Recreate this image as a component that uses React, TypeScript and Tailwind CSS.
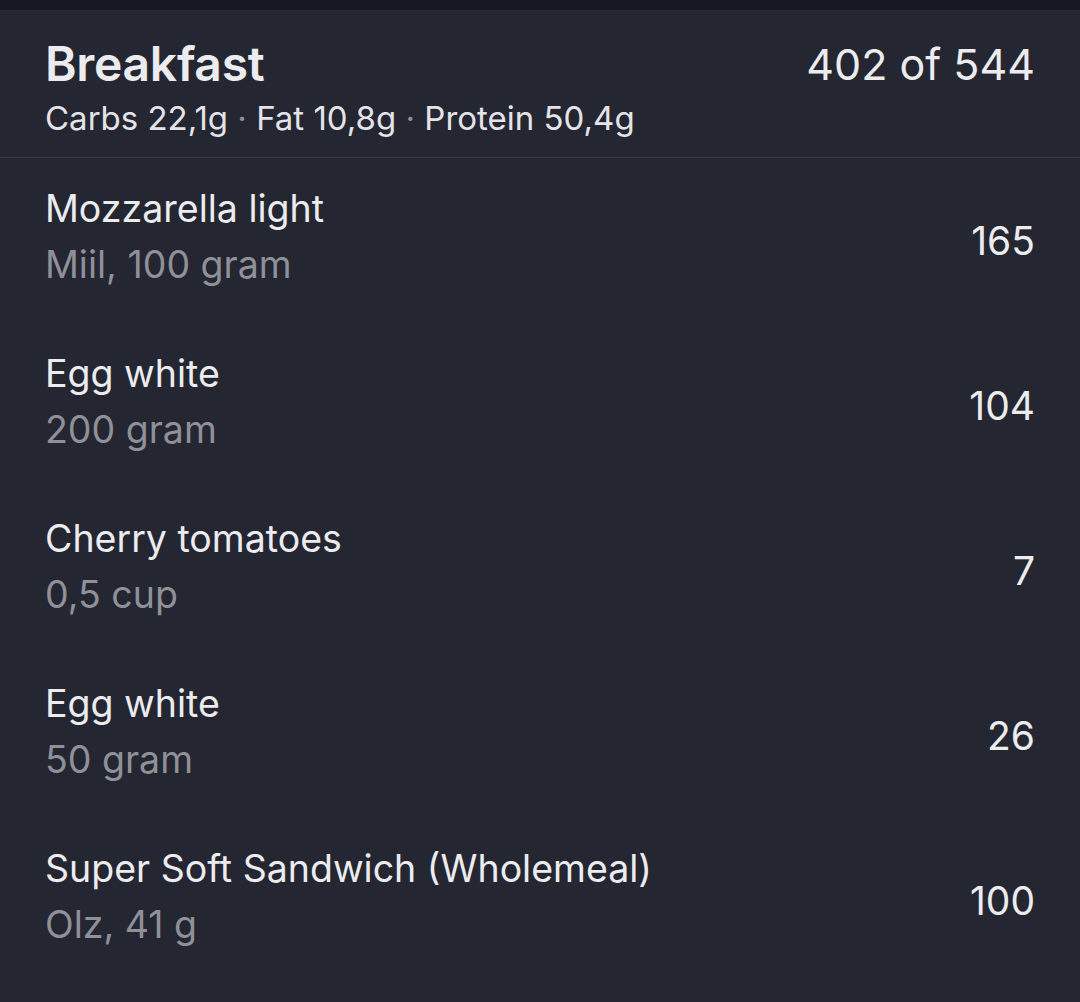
const items = [
  { name: 'Mozzarella light', detail: 'Miil, 100 gram', kcal: '165' },
  { name: 'Egg white', detail: '200 gram', kcal: '104' },
  { name: 'Cherry tomatoes', detail: '0,5 cup', kcal: '7' },
  { name: 'Egg white', detail: '50 gram', kcal: '26' },
  { name: 'Super Soft Sandwich (Wholemeal)', detail: 'Olz, 41 g', kcal: '100' },
];

export default function App() {
  return (
    <div
      className="min-h-[1002px] w-[1080px] bg-[#242632] text-[#ececef]"
      style={{ fontFamily: 'Inter, "Noto Sans", sans-serif' }}
    >
      <div className="h-[10px] bg-[#161826]" />
      <header className="flex h-[148px] items-start justify-between border-b border-[#353744] pl-[45px] pr-[45px] pt-[26px]">
        <div>
          <h1 className="text-[48px] font-semibold leading-[56px] tracking-[-0.3px]">Breakfast</h1>
          <p className="mt-[6px] text-[33px] leading-[40px] text-[#e4e4e8]">
            Carbs 22,1g <span className="text-[#8e9099]">·</span> Fat 10,8g{' '}
            <span className="text-[#8e9099]">·</span> Protein 50,4g
          </p>
        </div>
        <div className="text-[43px] leading-[56px]">402 of 544</div>
      </header>
      <ul>
        {items.map((item, i) => (
          <li key={i} className="flex h-[165px] items-center justify-between pl-[45px] pr-[45px]">
            <div className="mb-[8px]">
              <div className="text-[37.5px] leading-[46px]">{item.name}</div>
              <div className="mt-[10px] text-[37.5px] leading-[46px] text-[#8f9098]">{item.detail}</div>
            </div>
            <div className="text-[39px] leading-[46px]">{item.kcal}</div>
          </li>
        ))}
      </ul>
    </div>
  );
}
